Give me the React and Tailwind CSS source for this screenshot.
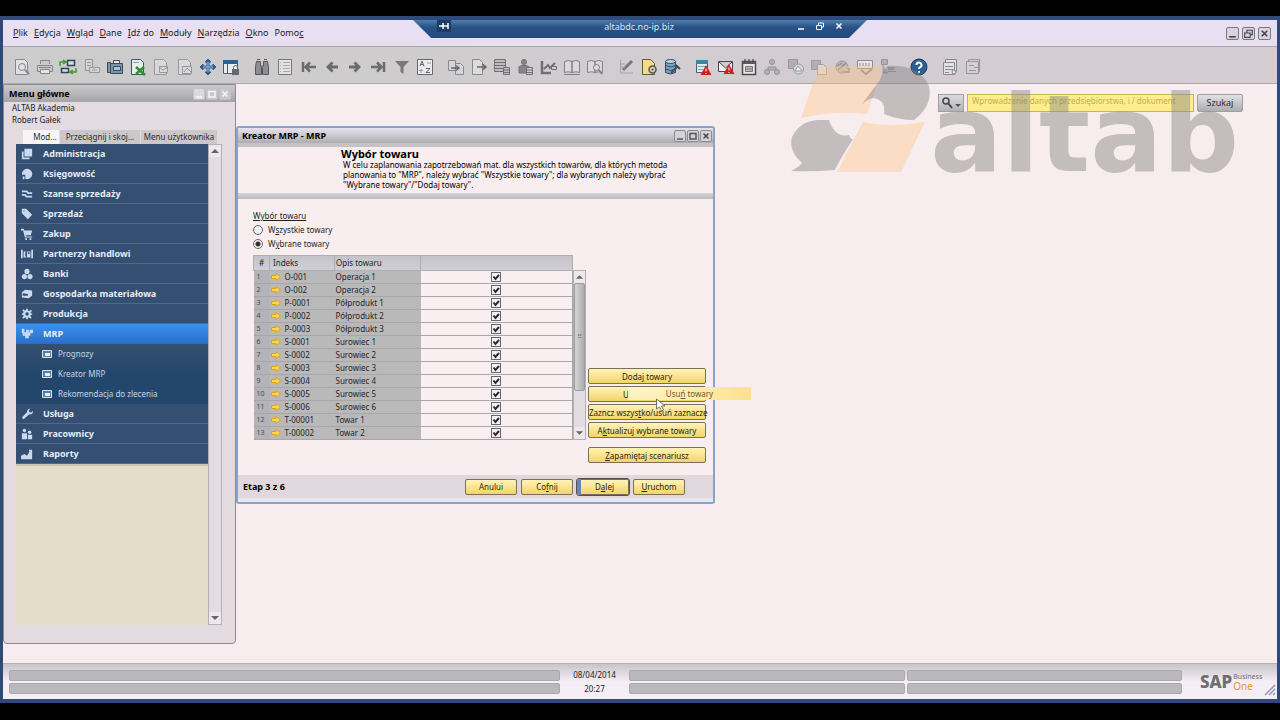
import React from "react";

const G = "#85858a";
const B = "#2f5f8f";

// Toolbar glyphs, all drawn on an 18x18 grid
const glyphs = {
  preview: (
    <g fill="#e2e1e4" stroke={G}>
      <path d="M2.500 1.500h9l3 3v12h-12z" />
      <circle cx="9" cy="9" r="3.500" />
      <path d="M12 12l4 4" strokeWidth="2" />
    </g>
  ),
  print: (
    <g fill="#c9c9cc" stroke={G}>
      <path d="M4.500 6V2.500h9V6" />
      <path d="M1.500 7.500h15v6h-15z" />
      <path d="M4.500 11.500h9v4h-9z" fill="#e4e4e6" />
      <path d="M3 9.500h12" />
    </g>
  ),
  send: (
    <g fill="none">
      <path d="M8.500 2.500h7v5h-7z M2.500 10.500h7v4h-7z" fill="#cfe0ee" stroke="#33424f" strokeWidth="1.500" />
      <path d="M1 8V4h5M4 2l3 2-3 2 M17 10v4h-5M14 12l-3 2 3 2" stroke="#3c9a2b" strokeWidth="1.500" />
    </g>
  ),
  fax: (
    <g fill="#d5d5d8" stroke="#96969b">
      <path d="M2.500 1.500h7v11h-7z" />
      <path d="M6.500 9.500h10v5h-10z" />
      <path d="M4 4.500h4M4 7.500h4M9 12h5" />
    </g>
  ),
  device: (
    <g stroke="#3c4b59">
      <path d="M1.500 4.500h3v10h-3z" fill="#8494a4" />
      <path d="M4.500 5.500h12v10h-12z" fill="#7d93aa" />
      <path d="M7.500 2.500h6v3h-6z" fill="#eee" />
      <path d="M7.500 8.500h7v4h-7z" fill="#a9c4de" />
    </g>
  ),
  excel: (
    <g>
      <path d="M2.500 1.500h9l3 3v12h-12z" fill="#e9eef0" stroke="#44525c" />
      <path d="M7 9l9 8M15 9l-8 7" stroke="#2f8f30" strokeWidth="2.500" />
      <path d="M4 4.500h6" stroke="#7aa" />
    </g>
  ),
  word: (
    <g fill="#d8d8da" stroke="#98989c">
      <path d="M2.500 1.500h9l3 3v12h-12z" />
      <path d="M7.500 8.500h8v6h-8z M7 9l4 3 5-3" />
    </g>
  ),
  pdf: (
    <g fill="#d8d8da" stroke="#98989c">
      <path d="M2.500 1.500h9l3 3v12h-12z" />
      <path d="M6.500 8.500h9v7h-9z M8 14l3-4 4 4" />
    </g>
  ),
  move: (
    <g stroke={B} fill={B}>
      <path d="M9 3v12M3 9h12" strokeWidth="3" />
      <path d="M9 1l3 3H6z M9 17l3-3H6z M1 9l3-3v6z M17 9l-3-3v6z" />
      <path d="M4 9h10M9 4v10" stroke="#9fc0de" />
    </g>
  ),
  lockScreen: (
    <g>
      <path d="M1.500 2.500h14v13h-14z" fill="#e8edf2" stroke="#3a5f86" />
      <path d="M1 2h15v4H1z" fill={B} />
      <path d="M5.500 6v9" stroke="#3a5f86" />
      <path d="M10 11h7v6h-7z" fill="#68686c" />
      <path d="M11.500 11V9.500a2 2 0 0 1 4 0V11" fill="none" stroke="#68686c" />
    </g>
  ),
  find: (
    <g fill="#8d8d92" stroke="#55555a">
      <path d="M3.500 3.500h4v4l1 2v7h-6v-8z M10.500 3.500h4l1 5v8h-6v-7l1-2z" />
      <path d="M4 1.500h3M11 1.500h3M8 8h2" />
    </g>
  ),
  list: (
    <g fill="#e2e2e4" stroke="#77777c">
      <path d="M2.500 1.500h13v15h-13z" />
      <path d="M7 4.500h7M7 7.500h7M7 10.500h7M7 13.500h7M4 4.500h1M4 7.500h1M4 10.500h1M4 13.500h1" stroke="#aaa" />
    </g>
  ),
  first: <path d="M3 4v10M5 9h11M10 4.500L5.500 9l4.500 4.500" fill="none" stroke="#6a6a70" strokeWidth="2.500" />,
  prev: <path d="M5 9h10M9.500 4.500L5 9l4.500 4.500" fill="none" stroke="#6a6a70" strokeWidth="2.800" />,
  next: <path d="M3 9h10M8.500 4.500L13 9l-4.500 4.500" fill="none" stroke="#6a6a70" strokeWidth="2.800" />,
  last: <path d="M15 4v10M2 9h11M8 4.500l4.500 4.500L8 13.500" fill="none" stroke="#6a6a70" strokeWidth="2.500" />,
  filter: <path d="M2 3h14l-5.500 6v7l-3-2V9z" fill="#77777c" />,
  sort: (
    <g fill="#ececee" stroke="#66666b">
      <path d="M1.500 1.500h15v15h-15z" />
      <path d="M4 8l2-5 2 5M5 6.500h2M10 10.500h4l-4 4h4" />
      <path d="M11 5h4M3 12.500h4M5 11v4" stroke="#999" />
    </g>
  ),
  docIn: (
    <g fill="#d5d5d7" stroke="#88888d">
      <path d="M1.500 2.500h7v10h-7z M8.500 5.500h5l3 3v8h-8z" />
      <path d="M4 10h7M9 7.500l3 2.500-3 2.500" stroke="#66666b" strokeWidth="1.500" />
    </g>
  ),
  docOut: (
    <g fill="#dcdcde" stroke="#88888d">
      <path d="M2.500 1.500h7l3 3v12h-10z" />
      <path d="M7 9h8M12.500 6l3.500 3-3.500 3" fill="none" stroke="#66666b" strokeWidth="1.500" />
    </g>
  ),
  grossProfit: (
    <g fill="#bdbdc0" stroke="#6f6f74">
      <path d="M1.500 1.500h11v12h-11z" />
      <path d="M2 4.500h10M2 7.500h10M2 10.500h10" />
      <path d="M10.500 9.500h6v7h-6z M11 12h5M11 14.500h5" />
    </g>
  ),
  payment: (
    <g fill="#85858a" stroke="#6f6f74">
      <circle cx="8" cy="4" r="2.500" />
      <path d="M3 9c0-2 10-2 10 0v6H3z" />
      <path d="M10.500 9.500h6v7h-6z M11 12h5M11 14.500h5" fill="#ccc" />
    </g>
  ),
  chart: (
    <g fill="none" stroke="#6f6f74">
      <path d="M2 3v12h9" strokeWidth="2.500" />
      <path d="M4 11l4-4 2 3 5-5" strokeWidth="2" />
      <path d="M11.500 8.500h5v3h-5z" fill="#ccc" />
    </g>
  ),
  book: (
    <g fill="#dadadc" stroke="#808085">
      <path d="M1.500 3.500q4-2 7.500 0v11q-3.500-1.500-7.500 0z M9 3.500q4-2 7.500 0v11q-3.500-1.500-7.500 0z" />
      <path d="M1 16.500h16" />
    </g>
  ),
  bookFind: (
    <g fill="#dadadc" stroke="#808085">
      <path d="M1.500 3.500q4-2 7.500 0v11q-3.500-1.500-7.500 0z M9 3.500q4-2 7.500 0v11q-3.500-1.500-7.500 0z" />
      <circle cx="10.500" cy="9.500" r="3" />
      <path d="M13 12l3 4" strokeWidth="2" />
    </g>
  ),
  edit: (
    <g fill="none" stroke="#a5a5a9">
      <path d="M3.500 2v13H16" />
      <path d="M6 12L15 3" stroke="#77777c" strokeWidth="3" />
      <path d="M8 6H4M8 9H4" />
    </g>
  ),
  docSettings: (
    <g>
      <path d="M2.500 1.500h8l4 4v11h-12z" fill="#f3dc86" stroke="#5b5646" />
      <circle cx="12.500" cy="11.500" r="3.500" fill="#d8d2b4" stroke="#55554f" strokeWidth="1.500" />
      <circle cx="12.500" cy="11.500" r="1" fill="#444" />
    </g>
  ),
  dbSettings: (
    <g>
      <path d="M2.500 3.500v11q5 3 10 0v-11" fill="#7fa3c4" stroke="#36485a" />
      <ellipse cx="7.500" cy="3.500" rx="5" ry="2" fill="#c2d6e6" stroke="#36485a" />
      <path d="M2.500 7.500q5 3 10 0M2.500 11q5 3 10 0" fill="none" stroke="#36485a" />
      <path d="M8 15l7-7M13 7l4 4" stroke="#3d4e5c" strokeWidth="2" />
    </g>
  ),
  alertCalendar: (
    <g>
      <path d="M2.500 2.500h11v12h-11z" fill="#e6edf2" stroke="#557" />
      <path d="M2 2h12v4H2z" fill="#3c86a8" />
      <path d="M4 8.500h8M4 11.500h5" stroke="#6aa" />
      <path d="M12 7l5.500 10h-11z" fill="#cf2020" />
      <path d="M12 10.500v3M12 15v1" stroke="#fff" />
    </g>
  ),
  alertMail: (
    <g>
      <path d="M1.500 3.500h14v10h-14z M2 4l6.500 6L15 4" fill="#f0f0f4" stroke="#445" />
      <path d="M12 6l5.500 10h-11z" fill="#cf2020" />
      <path d="M12 9.500v3M12 14v1" stroke="#fff" />
    </g>
  ),
  calendar: (
    <g>
      <path d="M2.500 3.500h13v13h-13z" fill="#e8e8ea" stroke="#4c4c50" strokeWidth="1.500" />
      <path d="M2 3h14v3H2z" fill="#5a5a5e" />
      <path d="M5 1v3M9 1v3M13 1v3" stroke="#333" />
      <path d="M5.500 8.500h7v5h-7z M5 11h7" fill="#bbb" stroke="#777" />
    </g>
  ),
  org: (
    <g fill="#b5b5b8" stroke="#909095">
      <circle cx="9" cy="4" r="2.500" />
      <path d="M5 9h8v3H5z" />
      <circle cx="4" cy="14" r="2.500" />
      <circle cx="14" cy="14" r="2.500" />
    </g>
  ),
  layers: (
    <g fill="#b0b0b3" stroke="#9a9a9e">
      <path d="M1.500 1.500h9v9h-9z" />
      <circle cx="11.500" cy="11" r="5" fill="#d8d8da" />
      <path d="M8 13l3-5 4 5z" fill="#f2f2f2" />
    </g>
  ),
  layersDoc: (
    <g fill="#b0b0b3" stroke="#a0a0a4">
      <path d="M1.500 2.500h9v9h-9z" />
      <path d="M7.500 6.500h6l3 3v7h-9z" fill="#ddd" />
    </g>
  ),
  wheel: (
    <g fill="#c0c0c2" stroke="#98989c">
      <circle cx="9" cy="9" r="6" />
      <path d="M5 12l8-7M4 8l5-3M9 14h7v-4" strokeWidth="2" />
    </g>
  ),
  badge: (
    <g fill="#e6e6e8" stroke="#8b8b90">
      <path d="M1.500 2.500h15v8h-15z" />
      <path d="M4 5v3M7 5v3M10 5v3M13 5v3" />
      <path d="M5 12l5 4 6-5" fill="none" strokeWidth="2" />
    </g>
  ),
  tree: (
    <g fill="#b0b0b3" stroke="#96969a">
      <path d="M2.500 1.500h6v5h-6z" />
      <path d="M4 7v8h5M9 9.500h6v2H9z M9 13.500h8" />
    </g>
  ),
  help: (
    <g>
      <circle cx="9" cy="9" r="8" fill="#2c5f92" stroke="#1f3f63" />
      <path d="M6.500 7a2.500 2.500 0 1 1 3.500 2.300q-1 .4-1 1.700M9 13v1.800" fill="none" stroke="#fff" strokeWidth="2" />
    </g>
  ),
  form: (
    <g fill="#e2e2e4" stroke="#88888d">
      <path d="M4.500 1.500h11v12h-11z" />
      <path d="M2.500 4.500h11v12h-11z" />
      <path d="M4 8.500h8M4 11.500h8M4 14.500h4" />
      <circle cx="13" cy="14" r="2" />
    </g>
  ),
  formAlt: (
    <g fill="#d2d2d4" stroke="#96969a">
      <path d="M4.500 1.500h11v12h-11z" />
      <path d="M2.500 3.500h12v12h-12z" />
      <path d="M5 7.500h5M5 12.500h7M10 9.500h4" />
    </g>
  ),
};

const toolbarGroups = [
  { width: "w-[227px]", items: ["preview", "print", "send", "fax", "device", "excel", "word", "pdf", "move", "lockScreen"] },
  { width: "w-[181px]", items: ["find", "list", "first", "prev", "next", "last", "filter", "sort"] },
  { width: "w-[157px]", items: ["docIn", "docOut", "grossProfit", "payment", "chart", "book", "bookFind"] },
  { width: "w-[64px]", items: ["edit", "docSettings", "dbSettings"] },
  { width: "w-[203px]", items: ["alertCalendar", "alertMail", "calendar", "org", "layers", "layersDoc", "wheel", "badge", "tree"] },
  { width: "w-[18px]", items: ["help"] },
  { width: "w-[41px]", items: ["form", "formAlt"] },
];

// Module glyphs on a 14x14 grid
const moduleIcons = {
  admin: <path d="M4 1h9v9H4z M1 4h2v7h7v2H1z" />,
  finance: <path d="M7 1a6 6 0 1 1-2 11.600V8H1.200A6 6 0 0 1 7 1z M2 10h2v3H2z" />,
  chances: <path d="M1 3h6l2 2h4v2H8L6 5H1z M1 7h4l2 2h6v2H6L4 9H1z" />,
  sales: <path d="M1 1h5l7 7-5 5-7-7z M3 3v1h1V3z" fillRule="evenodd" />,
  cart: <path d="M0 1h3l1 2h9l-1.500 5.500h-6L6 10h7v1H4.500L2.500 3H0z M5 12h2v2H5z M10 12h2v2h-2z" />,
  partners: <path d="M0 2h2v10H0z M12 2h2v10h-2z M3 4h3v1H5v5h1v1H3z M7 4h4v7H7z M8 5v2h2V5z" fillRule="evenodd" />,
  banks: (
    <g>
      <circle cx="7" cy="4" r="3" />
      <circle cx="4" cy="10" r="3" />
      <circle cx="10.500" cy="10" r="3" />
    </g>
  ),
  stock: <path d="M1 5l4-3 8 1v6l-4 3-8-1z M2 6v3h6V7z" fillRule="evenodd" />,
  production: (
    <path
      d="M6 1h2v2l2 .6L11.500 2 13 3.500 11 5l.5 1H13v2h-1.500L11 9.500l1.500 1.500-1.500 1.500L9.500 11l-1.500.5V13H6v-1.500L4.500 11 3 12.500 1.500 11 3 9.500 2.500 8H1V6h1.500L3 4.500 1.500 3 3 1.500 4.500 3 6 2.500z M7 5a2 2 0 1 0 .1 0z"
      fillRule="evenodd"
    />
  ),
  mrp: <path d="M1 1h3v4h2V2h3v3h1V2h4v4h-3v3H9v3H5V9H2V6H1z" />,
  service: <path d="M1 11l6-6a3.500 3.500 0 0 1 4-4L9 3l1 2 2 .3 2-2a3.500 3.500 0 0 1-4.500 4L3 13z" />,
  staff: (
    <g>
      <circle cx="4" cy="3" r="2" />
      <circle cx="10" cy="5" r="2" />
      <path d="M1 6h6v7H1z M8 8h5v5H8z" />
    </g>
  ),
  reports: <path d="M0 13V9l4-2 3 2 3-5-1-2h4v11z" />,
};

const modules = [
  { icon: "admin", label: "Administracja" },
  { icon: "finance", label: "Księgowość" },
  { icon: "chances", label: "Szanse sprzedaży" },
  { icon: "sales", label: "Sprzedaż" },
  { icon: "cart", label: "Zakup" },
  { icon: "partners", label: "Partnerzy handlowi" },
  { icon: "banks", label: "Banki" },
  { icon: "stock", label: "Gospodarka materiałowa" },
  { icon: "production", label: "Produkcja" },
  { icon: "mrp", label: "MRP", active: true, children: ["Prognozy", "Kreator MRP", "Rekomendacja do zlecenia"] },
  { icon: "service", label: "Usługa" },
  { icon: "staff", label: "Pracownicy" },
  { icon: "reports", label: "Raporty" },
];

const menu = [
  ["", "P", "lik"],
  ["", "E", "dycja"],
  ["", "W", "gląd"],
  ["", "D", "ane"],
  ["", "I", "dź do"],
  ["", "M", "oduły"],
  ["", "N", "arzędzia"],
  ["", "O", "kno"],
  ["Pomo", "c", ""],
];

const items = [
  ["O-001", "Operacja 1"],
  ["O-002", "Operacja 2"],
  ["P-0001", "Półprodukt 1"],
  ["P-0002", "Półprodukt 2"],
  ["P-0003", "Półprodukt 3"],
  ["S-0001", "Surowiec 1"],
  ["S-0002", "Surowiec 2"],
  ["S-0003", "Surowiec 3"],
  ["S-0004", "Surowiec 4"],
  ["S-0005", "Surowiec 5"],
  ["S-0006", "Surowiec 6"],
  ["T-00001", "Towar 1"],
  ["T-00002", "Towar 2"],
];

const Hot = ({ parts }) => (
  <>
    {parts[0]}
    <span className="underline">{parts[1]}</span>
    {parts[2]}
  </>
);

const WindowButton = ({ kind, label, className }) => (
  <button aria-label={label} className={`flex items-center justify-center rounded-[2px] border ${className}`}>
    <svg viewBox="0 0 10 10" className="h-full w-full" fill="none" stroke="currentColor" strokeWidth="1.500">
      {kind === "min" && <path d="M2 8h6" />}
      {kind === "max" && <path d="M2 2.500h6v5.500H2z" />}
      {kind === "restore" && <path d="M1.500 4.500h5v4h-5z M3.500 4V2h5v4H7" strokeWidth="1" />}
      {kind === "close" && <path d="M2.500 2.500l5 5M7.500 2.500l-5 5" />}
    </svg>
  </button>
);

const YellowButton = ({ parts, className = "" }) => (
  <button
    className={`h-4 whitespace-nowrap rounded-[2px] border border-[#77705a] bg-linear-to-b from-[#fff3b8] to-[#f3d467] text-center text-[8px] leading-[13px] text-[#2b2412] ${className}`}
  >
    <Hot parts={parts} />
  </button>
);

const ConnectionBar = () => (
  <div className="absolute left-1/2 top-0 flex h-[18px] w-[454px] -translate-x-1/2 items-start bg-linear-to-b from-[#4d7fae] via-[#2a5288] via-40% to-[#244a7c] pl-6 pr-[22px] [clip-path:polygon(0_0,100%_0,96%_100%,4%_100%)] text-white">
    <svg viewBox="0 0 14 12" className="h-3 w-[14px] bg-[#1d3c66]" fill="none" stroke="#fff" strokeWidth="1.500">
      <path d="M2 6h4M6 3v6M6 6h5M11 3v6" />
    </svg>
    <span className="flex-1 pl-8 text-center text-[9px] leading-[13px] text-[#dbe6f4]">altabdc.no-ip.biz</span>
    <div className="flex gap-[7px]">
      <WindowButton kind="min" label="Minimalizuj" className="h-3 w-3 border-transparent" />
      <WindowButton kind="restore" label="Przywróć" className="h-3 w-3 border-transparent" />
      <WindowButton kind="close" label="Zamknij" className="h-3 w-3 border-transparent" />
    </div>
  </div>
);

const Toolbar = () => (
  <div className="flex h-[38px] items-center gap-[13px] border-y border-[#a9a7ab] bg-linear-to-r from-[#cccccc] to-[#d6cdd3] pl-[10px] pt-1">
    {toolbarGroups.map((group) => (
      <div key={group.items[0]} className={`flex justify-between ${group.width}`}>
        {group.items.map((name) => (
          <button key={name} aria-label={name} className="h-[18px] w-[18px]">
            <svg viewBox="0 0 18 18" className="h-full w-full">
              {glyphs[name]}
            </svg>
          </button>
        ))}
      </div>
    ))}
  </div>
);

const SearchBar = () => (
  <div className="ml-auto mr-[34px] mt-[10px] flex h-[18px] w-fit gap-[3px] text-[#2d2d2d]">
    <button aria-label="Zakres wyszukiwania" className="w-[26px] border border-[#a09fa3] bg-linear-to-b from-[#dcdcde] to-[#b4b4b6]">
      <svg viewBox="0 0 24 16" className="h-full w-full" fill="none" stroke="#444" strokeWidth="1.500">
        <circle cx="7" cy="6" r="3" />
        <path d="M9 8l4 5" strokeWidth="2" />
        <path d="M16 9h6l-3 3z" fill="#555" stroke="none" />
      </svg>
    </button>
    <input
      aria-label="Szukaj w systemie"
      placeholder="Wprowadzenie danych przedsiębiorstwa, i / dokument"
      className="w-[227px] border border-[#c9b25c] bg-[#ffee8c] px-1 pb-1 text-[8px] text-[#5c5020] placeholder:text-[#c5ad52]"
    />
    <button className="w-[46px] rounded-[2px] border border-[#a09fa3] bg-linear-to-b from-[#e2e1e3] to-[#adadb0] text-[9px] leading-4">Szukaj</button>
  </div>
);

const ScrollBar = ({ thumb, className }) => (
  <div className={`flex flex-col border border-[#b3b1b5] bg-[#e3dde1] ${className}`}>
    <svg viewBox="0 0 12 12" className="h-3 w-full bg-[#ece8eb]">
      <path d="M2 8l4-4 4 4z" fill="#66666a" />
    </svg>
    <div className="flex-1">
      {thumb && (
        <div className="flex h-[108px] items-center justify-center rounded-[2px] border border-[#9c9b9e] bg-linear-to-r from-[#d6d5d7] to-[#adacae] text-[7px] text-[#777]">
          ⠿
        </div>
      )}
    </div>
    <svg viewBox="0 0 12 12" className="h-3 w-full bg-[#ece8eb]">
      <path d="M2 4l4 4 4-4z" fill="#66666a" />
    </svg>
  </div>
);

const MainMenu = () => (
  <section className="absolute left-0 top-0 flex h-[560px] w-[233px] flex-col rounded-b border border-[#8b8b90] bg-[#e3dbdf]">
    <header className="flex h-[17px] items-center gap-px bg-linear-to-b from-[#c9c8cb] to-[#a5a4a7] pl-[5px] pr-1">
      <h2 className="flex-1 text-[9px] font-bold text-black">Menu główne</h2>
      <WindowButton kind="min" label="Minimalizuj menu" className="h-3 w-3 border-[#c4c2c6] bg-[#dcdadd] text-[#f8f8f8]" />
      <WindowButton kind="max" label="Maksymalizuj menu" className="h-3 w-3 border-[#c4c2c6] bg-[#c8c6ca] text-[#f8f8f8]" />
      <WindowButton kind="close" label="Zamknij menu" className="h-3 w-3 border-[#c4c2c6] bg-[#c8c6ca] text-[#f8f8f8]" />
    </header>
    <div className="h-[28px] pl-2 text-[8px] leading-3 text-[#1d1d1d]">
      <p>ALTAB Akademia</p>
      <p>Robert Gałek</p>
    </div>
    <div className="ml-[19px] flex h-[14px] gap-px text-[8px] leading-[14px] text-[#2a2a2a]">
      <button className="w-9 bg-[#f8f3f5] pl-2">Mod...</button>
      <button className="w-20 whitespace-nowrap bg-[#cbc8cb]">Przeciągnij i skoj...</button>
      <button className="w-[76px] whitespace-nowrap bg-[#cbc8cb]">Menu użytkownika</button>
    </div>
    <div className="ml-3 mr-[13px] mb-[18px] flex flex-1">
      <nav className="flex-1 bg-[#e3ddca]">
        <ul className="border-b-2 border-[#c7c4b6]">
          {modules.map((mod) => (
            <li key={mod.label}>
              <button
                className={`flex h-5 w-full items-center gap-[9px] border-b pl-1 text-left text-[9px] font-bold text-[#e6edf6] ${
                  mod.active ? "border-[#2a6fc0] bg-linear-to-b from-[#3a93ee] to-[#2a70cc]" : "border-[#4d6a8d] bg-[#344f72]"
                }`}
              >
                <svg viewBox="0 0 14 14" className="h-3 w-[14px]" fill="#c9daf0">
                  {moduleIcons[mod.icon]}
                </svg>
                {mod.label}
              </button>
              {mod.children && (
                <ul className="bg-linear-to-b from-[#34506f] via-[#23476c] to-[#23476c]">
                  {mod.children.map((child) => (
                    <li key={child}>
                      <button className="flex h-5 w-full items-center gap-[6px] pl-[26px] text-[8px] text-[#c5d6e8]">
                        <svg viewBox="0 0 10 8" className="h-2 w-[10px]">
                          <path d="M.5.5h9v7h-9z" fill="#5c7ea3" stroke="#d5e2f0" />
                          <path d="M3 3h5v3H3z" fill="#e6eef8" />
                        </svg>
                        {child}
                      </button>
                    </li>
                  ))}
                </ul>
              )}
            </li>
          ))}
        </ul>
      </nav>
      <ScrollBar className="w-[14px]" />
    </div>
  </section>
);

const ItemTable = () => (
  <table className="w-[320px] table-fixed border-collapse text-left text-[8px] leading-3 text-[#262626]">
    <thead>
      <tr className="h-[15px] bg-linear-to-b from-[#c3c3c9] to-[#d0d0d5]">
        <th className="w-4 border border-[#aeaeb3] p-0 text-center font-normal">#</th>
        <th className="w-[65px] border border-[#aeaeb3] p-0 pl-[3px] font-normal">Indeks</th>
        <th className="w-[86px] border border-[#aeaeb3] p-0 pl-px font-normal">Opis towaru</th>
        <th aria-label="Wybrane" className="border border-[#aeaeb3] p-0"></th>
      </tr>
    </thead>
    <tbody>
      {items.map(([code, name], i) => (
        <tr key={code} className="h-[13px] border-b border-[#a8a6a9]">
          <td className="bg-[#b3b3b8] p-0 pl-[3px] text-[7px] text-[#4c4c50]">{i + 1}</td>
          <td className="bg-[#b9b9b9] p-0">
            <div className="flex items-center gap-1 pl-px">
              <svg viewBox="0 0 10 8" className="h-2 w-[10px]">
                <path d="M.5 2.500H5V.5L9.500 4 5 7.500v-2H.5z" fill="#ffd74a" stroke="#d9a520" />
              </svg>
              {code}
            </div>
          </td>
          <td className="bg-[#b9b9b9] p-0 pl-px">{name}</td>
          <td className="border-r border-[#a8a6a9] bg-[#f9eef0] p-0">
            <label className="relative mx-auto flex h-[10px] w-[10px]">
              <input
                type="checkbox"
                defaultChecked
                aria-label={name}
                className="peer h-[10px] w-[10px] appearance-none border border-[#66666a] bg-[#f4f2f4]"
              />
              <svg viewBox="0 0 10 10" className="absolute inset-0 hidden peer-checked:block" fill="none" stroke="#2a2a2f" strokeWidth="2">
                <path d="M2.500 4.500l2 2.500L8 3" />
              </svg>
            </label>
          </td>
        </tr>
      ))}
    </tbody>
  </table>
);

const radioClass = "h-[10px] w-[10px] appearance-none rounded-full border border-[#66666a] bg-[#f4eff2]";

const MrpWizard = () => (
  <section className="absolute left-[233px] top-[42px] flex w-[479px] flex-col rounded-[3px] border-2 border-[#86a3cf] bg-[#f8edef]">
    <header className="flex h-[15px] items-center gap-px bg-linear-to-b from-[#e6e3f0] to-[#aeadb2] pl-1 pr-px">
      <h2 className="flex-1 text-[9px] font-bold text-black">Kreator MRP - MRP</h2>
      <WindowButton kind="min" label="Minimalizuj" className="h-3 w-3 border-[#8c8b90] bg-[#d3d2d6] text-[#55555a]" />
      <WindowButton kind="max" label="Maksymalizuj" className="h-3 w-3 border-[#8c8b90] bg-[#d3d2d6] text-[#55555a]" />
      <WindowButton kind="close" label="Zamknij" className="h-3 w-3 border-[#8c8b90] bg-[#d3d2d6] text-[#44444a]" />
    </header>
    <div className="h-1 bg-[#c5c2c6]"></div>
    <div className="h-[46px] pl-[103px] text-black">
      <h3 className="text-[11px] font-bold leading-[13px]">Wybór towaru</h3>
      <p className="pl-[2px] text-[8px] leading-[10px]">
        W celu zaplanowania zapotrzebowań mat. dla wszystkich towarów, dla których metoda
        <br />
        planowania to "MRP", należy wybrać "Wszystkie towary"; dla wybranych należy wybrać
        <br />
        "Wybrane towary"/"Dodaj towary".
      </p>
    </div>
    <div className="h-[6px] bg-linear-to-b from-[#d6d3d7] to-[#bdbbbf]"></div>
    <div className="flex flex-col pl-[15px] pt-[10px]">
      <fieldset className="text-[8px] leading-[14px] text-[#1f1f1f]">
        <legend className="underline">Wybór towaru</legend>
        <label className="flex items-center gap-[5px]">
          <input type="radio" name="scope" className={radioClass} />
          <span>
            <Hot parts={["W", "s", "zystkie towary"]} />
          </span>
        </label>
        <label className="flex items-center gap-[5px]">
          <input
            type="radio"
            name="scope"
            defaultChecked
            className={`${radioClass} checked:bg-[radial-gradient(circle,#333_0,#333_2px,transparent_3px)]`}
          />
          <span>
            <Hot parts={["W", "y", "brane towary"]} />
          </span>
        </label>
      </fieldset>
      <div className="mt-1 flex">
        <ItemTable />
        <ScrollBar thumb className="mt-[15px] w-[13px]" />
        <div className="ml-[2px] flex w-[118px] flex-col justify-end gap-[2px] pb-[2px]">
          <YellowButton parts={["Doda", "j", " towary"]} />
          <div className="relative flex flex-col">
            <YellowButton parts={["U", "", ""]} className="pr-[42px]" />
            {/* button label while it is being dragged */}
            <div className="absolute left-10 top-px h-[13px] w-[123px] bg-linear-to-r from-[#fff8d8]/70 via-[#fdeeb0] to-[#fde08c] text-center text-[8px] leading-[13px] text-[#6b5a25]">
              <Hot parts={["Usu", "ń", " towary"]} />
            </div>
            <svg viewBox="0 0 12 14" className="absolute left-[67px] top-3 z-10 h-[14px] w-3">
              <path d="M1.500 1l8.500 7H6.500l2 4-2 1-2-4-3 2z" fill="#fff" stroke="#77705a" />
            </svg>
          </div>
          <YellowButton parts={["Zazncz wszys", "t", "ko/usuń zaznacze"]} />
          <YellowButton parts={["A", "k", "tualizuj wybrane towary"]} />
        </div>
      </div>
      <YellowButton parts={["", "Z", "apamiętaj scenariusz"]} className="ml-[335px] mt-[7px] w-[118px]" />
    </div>
    <footer className="mt-3 flex h-[23px] items-center gap-1 bg-[#e0d8dd] pl-[5px] pr-7">
      <span className="flex-1 text-[9px] font-bold text-black">Etap 3 z 6</span>
      <YellowButton parts={["Anului", "", ""]} className="w-[52px]" />
      <YellowButton parts={["Co", "f", "nij"]} className="w-[52px]" />
      <YellowButton parts={["D", "a", "lej"]} className="w-[52px] border-l-4 border-l-[#5f86bd] outline outline-[#55524a]" />
      <YellowButton parts={["", "U", "ruchom"]} className="w-[52px]" />
    </footer>
    <div className="h-1 bg-[#e3e8f2]"></div>
  </section>
);

const Watermark = () => (
  <div className="pointer-events-none absolute right-[38px] top-[44px] flex items-end">
    <svg viewBox="0 0 138 108" className="h-[108px] w-[140px]">
      <path d="M28 2h64L76 50q-30-4-66 4z" fill="#ffc080" fillOpacity=".38" />
      <path d="M72 58q24 6 62 0l-24 50H46z" fill="#ffc080" fillOpacity=".38" />
      <path d="M96 2q32-2 42 20 4 20-15 34-16 0-30-6 2-14-10-16-5 0-12 6 12-16 18-24 2-8 7-14z" fill="#828282" fillOpacity=".45" />
      <path d="M38 56q6 18 20 15 1 4 4 4-14 22-18 31-22 2-44 1 8-4 11-8-14-12-10-26 8-16 26-17z" fill="#828282" fillOpacity=".45" />
    </svg>
    <span className="font-['DejaVu_Sans'] text-[107px] font-bold leading-[76px] text-[#828282]/45">altab</span>
  </div>
);

const Slot = ({ className }) => (
  <div className={`flex flex-col gap-[2px] ${className}`}>
    <div className="h-[11px] rounded-[2px] border border-[#aaa8ab] bg-[#b9b8ba]"></div>
    <div className="h-[11px] rounded-[2px] border border-[#aaa8ab] bg-[#b9b8ba]"></div>
  </div>
);

const StatusBar = () => (
  <footer className="flex h-9 items-center border-t border-[#b5b2b6] bg-linear-to-b from-[#c9c5c9] to-[#f6eef6] to-50% pl-[6px]">
    <Slot className="flex-2" />
    <div className="w-[69px] text-center text-[8px] leading-[14px] text-[#222]">
      <p>08/04/2014</p>
      <p>20:27</p>
    </div>
    <Slot className="flex-1" />
    <Slot className="ml-[2px] flex-1" />
    <div className="ml-[18px] flex w-[62px] items-center text-[#6d6d72]">
      <span className="font-['Noto_Sans'] text-[17px] font-extrabold leading-4">SAP</span>
      <div className="ml-px flex flex-col">
        <span className="text-[7px] leading-[8px]">Business</span>
        <span className="text-[10px] leading-[10px] text-[#e09a1c]">One</span>
      </div>
    </div>
    <svg viewBox="0 0 12 12" className="mr-px mt-4 ml-[2px] h-3 w-3" stroke="#8c9ab5" strokeWidth="1.500">
      <path d="M1 11L11 1M5 11l6-6M9 11l2-2" />
    </svg>
  </footer>
);

export default function App() {
  return (
    <div className="h-screen bg-black pt-4 pb-[17px] font-['Noto_Sans',sans-serif]">
      <div className="relative flex h-full flex-col border-x-[3px] border-y-4 border-[#2f4a78] bg-[#f8edee]">
        <div className="flex h-[26px] shrink-0 items-center gap-[6px] bg-[#e8dff3] pl-[10px] pr-[6px] text-[9px] text-[#1c1c1c]">
          {menu.map((parts) => (
            <button key={parts.join("")}>
              <Hot parts={parts} />
            </button>
          ))}
          <div className="ml-auto flex gap-[3px]">
            <WindowButton kind="min" label="Minimalizuj okno" className="h-[13px] w-[13px] border-[#77777c] bg-[#d8d4dc] text-[#44444a]" />
            <WindowButton kind="restore" label="Przywróć okno" className="h-[13px] w-[13px] border-[#77777c] bg-[#d8d4dc] text-[#44444a]" />
            <WindowButton kind="close" label="Zamknij okno" className="h-[13px] w-[13px] border-[#77777c] bg-[#d8d4dc] text-[#44444a]" />
          </div>
        </div>
        <ConnectionBar />
        <Toolbar />
        <main className="relative flex-1">
          <SearchBar />
          <MainMenu />
          <MrpWizard />
        </main>
        <StatusBar />
        <Watermark />
      </div>
    </div>
  );
}
